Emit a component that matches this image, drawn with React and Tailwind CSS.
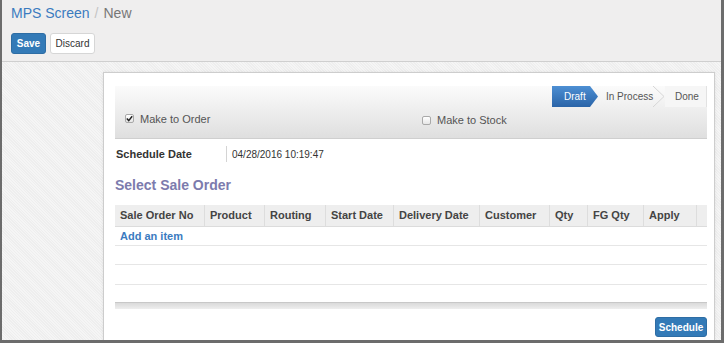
import React from 'react';

const columns = [
  { label: 'Sale Order No', w: 'w-[90px]' },
  { label: 'Product', w: 'w-[60px]' },
  { label: 'Routing', w: 'w-[61px]' },
  { label: 'Start Date', w: 'w-[68px]' },
  { label: 'Delivery Date', w: 'w-[86px]' },
  { label: 'Customer', w: 'w-[70px]' },
  { label: 'Qty', w: 'w-[38px]' },
  { label: 'FG Qty', w: 'w-[56px]' },
  { label: 'Apply', w: 'w-[53px]' },
];

function CheckBox({ checked }) {
  return (
    <span className="w-[9px] h-[9px] rounded-[2px] border border-[#a9a9a9] bg-gradient-to-b from-white to-[#e6e6e6] flex items-center justify-center">
      {checked && (
        <svg width="7" height="7" viewBox="0 0 7 7">
          <path d="M0.8 3.6 L2.7 5.6 L6.2 1.2" fill="none" stroke="#222" strokeWidth="1.5" />
        </svg>
      )}
    </span>
  );
}

export default function App() {
  return (
    <div className="w-[724px] h-[343px] overflow-hidden flex flex-col border-l-2 border-r-[3px] border-b-[3px] border-[#6c6c6c] font-['Liberation_Sans',Arial,sans-serif] text-[#333]">
      {/* control panel */}
      <div className="h-[62px] shrink-0 bg-[#efeeee] border-b border-[#cfcfcf] pl-[9px] pt-[4px]">
        <div className="text-[14px] leading-[18px] flex items-center gap-[5px]">
          <span className="text-[#3b7bbf]">MPS Screen</span>
          <span className="text-[#c4c4c4]">/</span>
          <span className="text-[#777]">New</span>
        </div>
        <div className="flex gap-[4px] mt-[11px]">
          <button className="h-[21px] w-[35px] rounded-[3px] bg-[#337ab7] border border-[#2e6da4] text-white text-[10px] font-bold">Save</button>
          <button className="h-[21px] w-[45px] rounded-[3px] bg-white border border-[#d6d6d6] text-[#333] text-[10px]">Discard</button>
        </div>
      </div>

      {/* body */}
      <div className="flex-1 flex pl-[101px] pr-[6px] pt-[10px] bg-[#f2f2f2] bg-[repeating-linear-gradient(45deg,#f5f5f5_0px,#f5f5f5_1px,#eeeeee_1px,#eeeeee_2px)]">
        <div className="flex-1 bg-white border border-b-0 border-[#cdcdcd] shadow-[0_0_3px_rgba(0,0,0,0.08)] pl-[11px] pr-[7px] pt-[13px] flex flex-col">
          {/* status bar */}
          <div className="h-[53px] shrink-0 bg-gradient-to-b from-[#fbfbfb] to-[#dfdfdf] border-b border-[#cfcfcf]">
            <div className="flex justify-end h-[21px] text-[10px]">
              <div className="w-[46px] h-full bg-gradient-to-b from-[#4d8fd3] to-[#2a64a8] text-white flex items-center pl-[12px] [clip-path:polygon(0_0,calc(100%-8px)_0,100%_50%,calc(100%-8px)_100%,0_100%)]">
                Draft
              </div>
              <div className="h-full flex items-center pl-[8px] text-[#555] relative w-[67px]">
                In Process
                <svg className="absolute right-0 top-0" width="13" height="21" viewBox="0 0 13 21">
                  <path d="M1 0 L12 10.5 L1 21" fill="none" stroke="#d6d6d6" strokeWidth="1" />
                </svg>
              </div>
              <div className="h-full w-[42px] bg-[#f6f6f6] border-r border-[#e2e2e2] flex items-center pl-[10px] text-[#555]">
                Done
              </div>
            </div>
            <div className="flex items-center mt-[2px] text-[11px] text-[#555]">
              <div className="w-[307px] pl-[10px] flex items-center gap-[6px]">
                <CheckBox checked />
                <span>Make to Order</span>
              </div>
              <div className="flex items-center gap-[6px] mt-[3px]">
                <CheckBox />
                <span>Make to Stock</span>
              </div>
            </div>
          </div>

          {/* schedule date */}
          <div className="flex items-center h-[16px] mt-[7px] text-[11px]">
            <span className="w-[111px] pl-[1px] font-bold text-[#333]">Schedule Date</span>
            <span className="h-full border-l border-[#d4d4d4] pl-[5px] flex items-center text-[10px] text-[#333]">04/28/2016 10:19:47</span>
          </div>

          {/* heading */}
          <div className="mt-[13px] text-[14px] leading-[20px] font-bold text-[#7c7bad]">Select Sale Order</div>

          {/* table */}
          <div className="mt-[10px] text-[11px]">
            <div className="flex h-[22px] bg-[#eeeeee] border-b border-[#dcdcdc] font-bold text-[#444]">
              {columns.map(c => (
                <div key={c.label} className={`${c.w} h-full border-r border-[#dddddd] flex items-center pl-[5px]`}>
                  {c.label}
                </div>
              ))}
              <div className="flex-1" />
            </div>
            <div className="h-[19px] border-b border-[#e6e6e6] flex items-center pl-[5px] text-[#3b7bbf] font-bold">Add an item</div>
            <div className="h-[19px] border-b border-[#e6e6e6]" />
            <div className="h-[20px] border-b border-[#e6e6e6]" />
            <div className="h-[17px]" />
            <div className="h-[7px] border-t border-[#c8c8c8] bg-gradient-to-b from-[#dadada] to-[#eeeeee]" />
          </div>

          <div className="flex justify-end mt-[8px]">
            <button className="h-[20px] w-[52px] rounded-[3px] bg-[#337ab7] border border-[#2e6da4] text-white text-[10px] font-bold">Schedule</button>
          </div>
        </div>
      </div>
    </div>
  );
}
